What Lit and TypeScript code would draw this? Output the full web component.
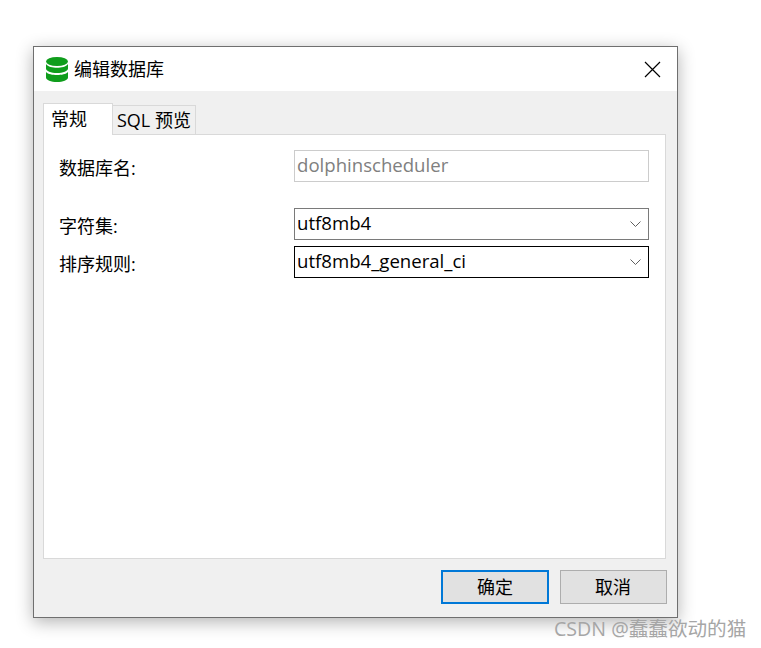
import { LitElement, css, html } from "lit";
import { customElement } from "lit/decorators.js";

@customElement("app-root")
export class AppRoot extends LitElement {
  static styles = css`
    :host {
      display: block;
      height: 648px;
      box-sizing: border-box;
      padding: 46px 0 0 33px;
      background: #fff;
      position: relative;
      overflow: hidden;
      font-family: "Open Sans", "Noto Sans CJK SC", sans-serif;
      font-size: 18px;
      color: #000;
    }
    .window {
      width: 645px;
      height: 572px;
      box-sizing: border-box;
      border: 1px solid #6f6f6f;
      background: #f0f0f0;
      box-shadow: 0 4px 16px rgba(0, 0, 0, 0.3);
      display: flex;
      flex-direction: column;
    }
    .titlebar {
      height: 44px;
      background: #fff;
      display: flex;
      align-items: center;
      padding: 0 16px 0 12px;
      gap: 6px;
      flex: none;
    }
    .title {
      flex: 1;
      line-height: 24px;
    }
    .body {
      flex: 1;
      display: flex;
      flex-direction: column;
      padding: 13px 11px 0 9px;
    }
    .tabs {
      display: flex;
      align-items: flex-end;
      height: 31px;
      flex: none;
      position: relative;
      z-index: 1;
      margin-bottom: -1px;
    }
    .tab {
      box-sizing: border-box;
      border: 1px solid #d9d9d9;
      line-height: 24px;
      white-space: nowrap;
    }
    .tab.active {
      width: 70px;
      height: 32px;
      background: #fff;
      border-bottom: none;
      padding: 3px 0 0 7px;
    }
    .tab.other {
      width: 84px;
      height: 30px;
      margin-left: -1px;
      background: #f0f0f0;
      padding: 2px 0 0 4px;
    }
    .panel {
      box-sizing: border-box;
      height: 425px;
      flex: none;
      background: #fff;
      border: 1px solid #d9d9d9;
      padding: 15px 16px 0 15px;
    }
    .row {
      display: grid;
      grid-template-columns: 235px 355px;
      align-items: center;
    }
    .row + .row {
      margin-top: 6px;
    }
    .row.gap {
      margin-top: 26px;
    }
    .label {
      line-height: 32px;
      padding-top: 2px;
      height: 32px;
      box-sizing: border-box;
    }
    .field {
      box-sizing: border-box;
      height: 32px;
      border: 1px solid #7a7a7a;
      background: #fff;
      display: flex;
      align-items: center;
      padding: 0 7px 0 2px;
      line-height: 28px;
      font-size: 18.6px;
    }
    .field.disabled {
      border-color: #cccccc;
      color: #808080;
    }
    .field.focus {
      border-color: #000;
    }
    .value {
      flex: 1;
      margin-top: -2px;
    }
    .footer {
      flex: 1;
      display: flex;
      justify-content: flex-end;
      align-items: flex-start;
      gap: 11px;
      padding-top: 11px;
      margin-right: -1px;
    }
    .btn {
      box-sizing: border-box;
      width: 107px;
      height: 34px;
      border: 1px solid #adadad;
      background: #e1e1e1;
      font: inherit;
      color: inherit;
      padding: 0 1px 0 0;
      line-height: 30px;
    }
    .btn.default {
      width: 108px;
      padding: 0;
      border: 2px solid #0078d7;
    }
    .watermark {
      position: absolute;
      left: 554px;
      top: 615px;
      line-height: 28px;
      font-size: 19.6px;
      color: #a6a6a6;
      white-space: nowrap;
    }
  `;

  chevron() {
    return html`<svg width="11" height="6" viewBox="0 0 11 6">
      <path d="M.5.5 5.5 5.5 10.5.5" fill="none" stroke="#606060" stroke-width="1" />
    </svg>`;
  }

  render() {
    return html`
      <div class="window">
        <div class="titlebar">
          <svg width="22" height="25" viewBox="0 0 22 25">
            <ellipse cx="11" cy="4.500" rx="11" ry="4.500" fill="#0f9d1c" />
            <path d="M0 7C2 9.800 6.500 10.800 11 10.800S20 9.800 22 7V11.500C22 14 17 16 11 16S0 14 0 11.500Z" fill="#0f9d1c" />
            <path d="M0 15C2 17.300 6.500 18 11 18S20 17.300 22 15V20.500C22 23 17 25 11 25S0 23 0 20.500Z" fill="#0f9d1c" />
          </svg>
          <div class="title">编辑数据库</div>
          <svg width="17" height="17" viewBox="0 0 17 17">
            <path d="M1 1 16 16M16 1 1 16" stroke="#000" stroke-width="1.200" fill="none" />
          </svg>
        </div>
        <div class="body">
          <div class="tabs">
            <div class="tab active">常规</div>
            <div class="tab other">SQL 预览</div>
          </div>
          <div class="panel">
            <div class="row">
              <div class="label">数据库名:</div>
              <div class="field disabled"><span class="value">dolphinscheduler</span></div>
            </div>
            <div class="row gap">
              <div class="label">字符集:</div>
              <div class="field"><span class="value">utf8mb4</span>${this.chevron()}</div>
            </div>
            <div class="row">
              <div class="label">排序规则:</div>
              <div class="field focus"><span class="value">utf8mb4_general_ci</span>${this.chevron()}</div>
            </div>
          </div>
          <div class="footer">
            <button class="btn default">确定</button>
            <button class="btn">取消</button>
          </div>
        </div>
      </div>
      <div class="watermark">CSDN @蠢蠢欲动的猫</div>
    `;
  }
}
